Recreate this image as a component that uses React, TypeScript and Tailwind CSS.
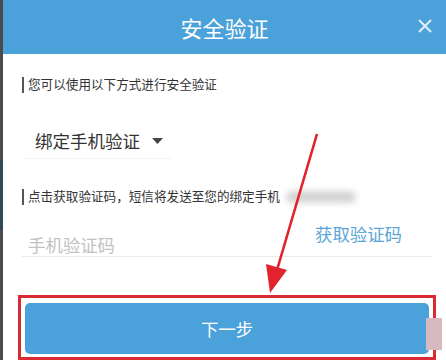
import React from "react"

const font = { fontFamily: '"Noto Sans CJK SC", "Noto Sans", sans-serif' }

const SectionLabel: React.FC<{ text: string; children?: React.ReactNode }> = ({ text, children }) => (
  <div className="flex items-center h-[16px]">
    <span className="w-[2px] h-[16px] bg-[#555555]" />
    <span className="ml-[4px] text-[12.6px] leading-none text-[#333333]">{text}</span>
    {children}
  </div>
)

const App: React.FC = () => {
  return (
    <div className="relative w-[446px] h-[360px] flex overflow-hidden bg-white" style={font}>
      <div className="w-[3px] h-full flex flex-col">
        <div className="h-[160px] bg-[#4b4b4b]" />
        <div className="h-[70px] bg-[#2e4a52]" />
        <div className="flex-1 bg-[#4b4b4b]" />
      </div>

      <div className="flex-1 flex flex-col">
        <div className="h-[54px] bg-[#4ba1da] flex items-center justify-center relative">
          <span className="text-white text-[22px] leading-none">安全验证</span>
          <span className="absolute right-[14px] top-[19px]">
            <svg width="14" height="14" viewBox="0 0 14 14">
              <path d="M1 1 L13 13 M13 1 L1 13" stroke="#dff0fb" strokeWidth="2" />
            </svg>
          </span>
        </div>

        <div className="pl-[19px] pr-[13px] pt-[23px]">
          <SectionLabel text="您可以使用以下方式进行安全验证" />

          <div className="mt-[33px] ml-[13px] flex items-center h-[30px]">
            <span className="text-[17.5px] text-[#333333] leading-none">绑定手机验证</span>
            <svg className="ml-[12px]" width="11" height="6" viewBox="0 0 11 6">
              <path d="M0 0 H11 L5.5 6 Z" fill="#444444" />
            </svg>
          </div>
          <div className="mt-[2px] w-[150px] h-px bg-[#f3f3f3]" />

          <div className="mt-[30px]">
            <SectionLabel text="点击获取验证码，短信将发送至您的绑定手机">
              <span className="ml-[6px] w-[70px] h-[12px] rounded-full bg-[#d4d4d4] blur-[3px]" />
            </SectionLabel>
          </div>

          <div className="mt-[20px] flex items-start justify-between">
            <span className="mt-[11px] ml-[6px] text-[17.4px] leading-none text-[#c2c2c2]">手机验证码</span>
            <span className="mr-[31px] text-[17.4px] leading-none text-[#5aa6d6]">获取验证码</span>
          </div>
          <div className="mt-[3px] h-px bg-[#ececec]" />

          <div className="mt-[38px] -ml-[4px] mr-[-3px] border-[3px] border-[#dc2a34] px-[4px] pt-[5px] pb-[3px]">
            <div className="h-[51px] rounded-[5px] bg-[#4ba1da] flex items-center justify-center">
              <span className="text-white text-[17.4px] leading-none">下一步</span>
            </div>
          </div>
        </div>
      </div>

      <svg className="absolute left-0 top-0 pointer-events-none" width="446" height="360" viewBox="0 0 446 360">
        <line x1="317" y1="134" x2="277" y2="270" stroke="#e0232d" strokeWidth="2.6" />
        <path d="M270 293 L266 264 L287 270 Z" fill="#e0232d" />
      </svg>

      <div className="absolute left-[426px] top-[318px] w-[16px] h-[32px] bg-[#d8b9c0]" />
    </div>
  )
}

export default App
